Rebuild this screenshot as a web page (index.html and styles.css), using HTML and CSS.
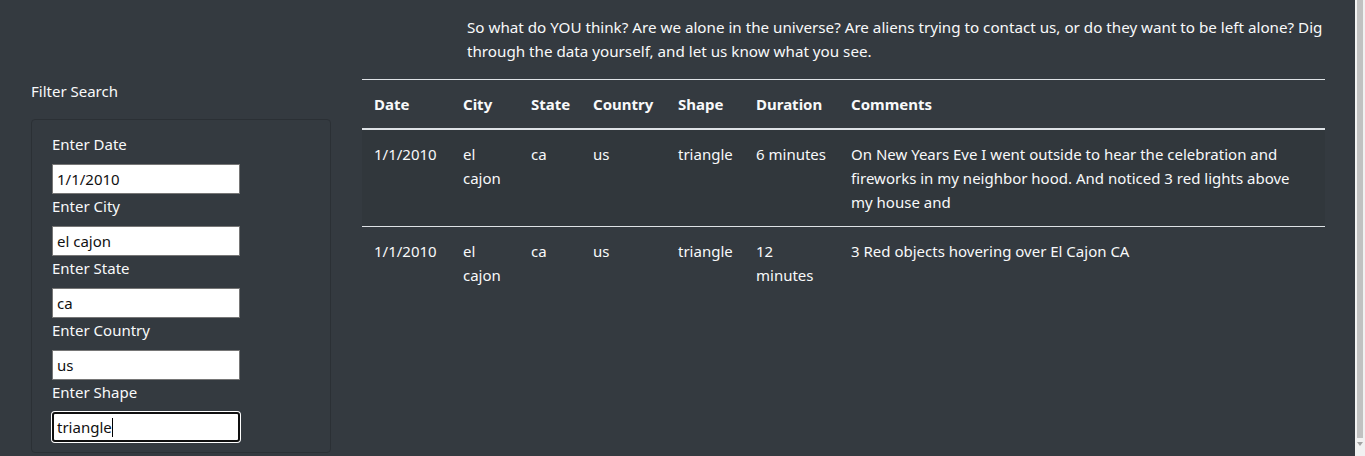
FILE: index.html
```html
<!DOCTYPE html>
<html lang="en">
<head>
<meta charset="utf-8">
<title>UFO Sightings</title>
<link rel="stylesheet" href="styles.css">
</head>
<body>
<div class="screen">
  <div class="page">
    <div class="intro-row">
      <p class="intro">So what do YOU think? Are we alone in the universe? Are aliens trying to contact us, or do they want to be left alone? Dig through the data yourself, and let us know what you see.</p>
    </div>
    <div class="main-row">
      <aside class="filters">
        <div class="filters-title">Filter Search</div>
        <div class="filter-card">
          <label class="filter-label" for="date">Enter Date</label>
          <input class="filter-input" id="date" type="text" value="1/1/2010">
          <label class="filter-label" for="city">Enter City</label>
          <input class="filter-input" id="city" type="text" value="el cajon">
          <label class="filter-label" for="state">Enter State</label>
          <input class="filter-input" id="state" type="text" value="ca">
          <label class="filter-label" for="country">Enter Country</label>
          <input class="filter-input" id="country" type="text" value="us">
          <label class="filter-label" for="shape">Enter Shape</label>
          <div class="input-wrap">
            <input class="filter-input is-focused" id="shape" type="text" value="triangle">
            <span class="caret"></span>
          </div>
        </div>
      </aside>
      <section class="results">
        <table class="ufo-table">
          <colgroup>
            <col class="c-date"><col class="c-city"><col class="c-state"><col class="c-country"><col class="c-shape"><col class="c-duration"><col class="c-comments">
          </colgroup>
          <thead>
            <tr><th>Date</th><th>City</th><th>State</th><th>Country</th><th>Shape</th><th>Duration</th><th>Comments</th></tr>
          </thead>
          <tbody>
            <tr class="striped">
              <td>1/1/2010</td><td>el cajon</td><td>ca</td><td>us</td><td>triangle</td><td>6&nbsp;minutes</td>
              <td>On New Years Eve I went outside to hear the celebration and fireworks in my neighbor hood. And noticed 3 red lights above my house and</td>
            </tr>
            <tr>
              <td>1/1/2010</td><td>el cajon</td><td>ca</td><td>us</td><td>triangle</td><td>12 minutes</td>
              <td>3 Red objects hovering over El Cajon CA</td>
            </tr>
          </tbody>
        </table>
      </section>
    </div>
  </div>
  <div class="scrollbar">
    <div class="scroll-thumb"></div>
    <div class="scroll-arrow"></div>
  </div>
</div>
</body>
</html>
```

FILE: styles.css
```css
* { box-sizing: border-box; }
html, body { margin: 0; padding: 0; height: 100%; overflow: hidden; }
body {
  background: #343a40;
  color: #f8f9fa;
  font-family: "Noto Sans", "Open Sans", sans-serif;
  font-size: 15px;
  line-height: 24px;
}
.screen { display: flex; height: 456px; }
.page { flex: 1; min-width: 0; }
.intro-row { padding: 15px 30px 0 467px; }
.intro { margin: 0 0 16px; font-size: 15.2px; }
.main-row { display: flex; padding-left: 31px; gap: 31px; }
.filters { width: 300px; flex: none; }
.filters-title { margin-bottom: 16px; }
.filter-card {
  border: 1px solid #2b3035;
  border-radius: 4px;
  padding: 12px 20px 10px;
  height: 334px;
}
.filter-label { display: block; height: 24px; margin-bottom: 8px; }
.filter-input {
  display: block;
  width: 188px;
  height: 30px;
  border: 1px solid #767676;
  background: #fff;
  color: #111;
  font: inherit;
  padding: 1px 4px;
  outline: none;
  margin: 0;
}
.input-wrap { position: relative; width: 188px; }
.filter-input.is-focused {
  border: 2px solid #101010;
  border-radius: 3px;
  box-shadow: 0 0 0 1px #fff;
  padding: 0 3px;
}
.caret {
  position: absolute;
  left: 60px;
  top: 6px;
  width: 1px;
  height: 19px;
  background: #000;
}
.results { width: 963px; flex: none; }
.ufo-table {
  width: 100%;
  border-collapse: collapse;
  table-layout: fixed;
  color: #f8f9fa;
}
.c-date { width: 89px; }
.c-city { width: 68px; }
.c-state { width: 62px; }
.c-country { width: 85px; }
.c-shape { width: 78px; }
.c-duration { width: 95px; }
.c-comments { width: 486px; }
.ufo-table th, .ufo-table td {
  padding: 12px;
  text-align: left;
  vertical-align: top;
  border-top: 1px solid #dee2e6;
}
.ufo-table th { font-weight: 700; border-bottom: 2px solid #dee2e6; }
.ufo-table tbody tr:first-child td { border-top: none; }
.ufo-table tr.striped { background: rgba(0, 0, 0, 0.05); }
.scrollbar {
  width: 10px;
  flex: none;
  background: #f1f1f1;
  position: relative;
  padding: 0 2px;
}
.scroll-thumb { height: 438px; background: #c1c1c1; }
.scroll-arrow {
  position: absolute;
  left: 2px;
  top: 442px;
  width: 0; height: 0;
  border-left: 3px solid transparent;
  border-right: 3px solid transparent;
  border-top: 4px solid #a3a3a3;
}
```
